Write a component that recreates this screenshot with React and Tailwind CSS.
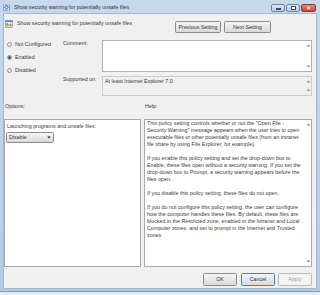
function UpArrow() {
  return (
    <svg width="5" height="3" viewBox="0 0 5 3"><path d="M0.5 2.5 L2.5 0.5 L4.5 2.5 Z" fill="#8a8a8a" /></svg>
  );
}
function DownArrow() {
  return (
    <svg width="5" height="3" viewBox="0 0 5 3"><path d="M0.5 0.5 L2.5 2.5 L4.5 0.5 Z" fill="#8a8a8a" /></svg>
  );
}

function Radio({ checked, label }) {
  return (
    <div className="h-[13px] flex items-start">
      <div className="mt-[1px] ml-[3px] w-[5px] h-[5px] rounded-full border-[0.7px] border-[#8a8f96] bg-[#f4f4f4] flex items-center justify-center">
        {checked && <div className="w-[2.4px] h-[2.4px] rounded-full bg-[#2b5d95]" />}
      </div>
      <span className="ml-[3px] mt-[-0.5px]">{label}</span>
    </div>
  );
}

function Btn({ children, w, variant }) {
  const base =
    variant === "focus"
      ? "border-[#3c85c2] text-[#333333]"
      : variant === "disabled"
      ? "border-[#b6babd] text-[#9a9a9a] bg-none bg-[#f4f4f4]"
      : "border-[#8c8c8c] text-[#333333]";
  return (
    <div
      className={`${w} h-full rounded-[1.5px] border bg-gradient-to-b from-[#f5f5f5] to-[#dadada] flex items-center justify-center ${base}`}
    >
      {children}
    </div>
  );
}

export default function App() {
  return (
    <div className="w-[320px] h-[295px] overflow-hidden bg-[#e4ebf3] font-['Liberation_Sans',Arial,sans-serif] text-[5.35px] leading-[7px] text-[#3a3a3a]">
      <div className="h-[292px] flex flex-col bg-gradient-to-b from-[#c9d9ec] to-[#b3cae6] border-b border-[#7f9bbd]">
        {/* title bar */}
        <div className="h-[14px] flex items-start pl-[3px] pr-[4px] pt-[4px]">
          <svg width="7" height="7" viewBox="0 0 7 7">
            <rect x="0.5" y="1" width="6" height="5.5" fill="#e8eef6" stroke="#5a7fae" strokeWidth="0.6" />
            <path d="M1 3.5 L3.5 1 L6 3.5 L3.5 6 Z" fill="#3f74b8" />
            <circle cx="3.5" cy="3.5" r="1" fill="#ffffff" />
          </svg>
          <span className="ml-[4px] mt-[-0.5px] text-[#22303f]">Show security warning for potentially unsafe files</span>
          <div className="ml-auto flex h-[8px]">
            <div className="w-[14px] h-full rounded-[2px] border-[0.7px] border-[#6a84a8] bg-gradient-to-b from-[#dce7f4] to-[#b7cbe3] flex items-end justify-center pb-[1.5px]">
              <div className="w-[5px] h-[1.5px] bg-white border-[0.5px] border-[#3b4c63]" />
            </div>
            <div className="ml-[1px] w-[14px] h-full rounded-[2px] border-[0.7px] border-[#6a84a8] bg-gradient-to-b from-[#dce7f4] to-[#b7cbe3] flex items-center justify-center">
              <div className="w-[5px] h-[3.5px] border-[0.8px] border-t-[1.3px] border-[#3b4c63] bg-white" />
            </div>
            <div className="ml-[1px] w-[15px] h-full rounded-[2px] border-[0.7px] border-[#8a3a30] bg-gradient-to-b from-[#e48b7b] to-[#c4402e] flex items-center justify-center">
              <svg width="5" height="4" viewBox="0 0 5 4"><path d="M0.8 0.5 L4.2 3.5 M4.2 0.5 L0.8 3.5" stroke="#ffffff" strokeWidth="1" /></svg>
            </div>
          </div>
        </div>

        {/* client */}
        <div className="flex-1 mx-[4px] mb-[3px] bg-[#f0f0f0] flex flex-col shadow-[0_0_0_1px_#a4b8d2]">
          {/* row1 */}
          <div className="h-[19px] flex items-start">
            <svg width="8" height="8" viewBox="0 0 8 8" className="mt-[6px] ml-[1px]">
              <rect x="0.5" y="0.5" width="7" height="7" fill="#f4f6f8" stroke="#6e7f95" strokeWidth="0.6" />
              <rect x="0.5" y="0.5" width="7" height="1.6" fill="#5b86c0" />
              <rect x="1.5" y="3" width="1.3" height="3.5" fill="#5aa04a" />
              <rect x="3.3" y="4" width="1.3" height="2.5" fill="#d9a23a" />
              <rect x="5.1" y="3.5" width="1.3" height="3" fill="#c85a4a" />
            </svg>
            <span className="ml-[4px] mt-[5.5px]">Show security warning for potentially unsafe files</span>
            <div className="ml-auto mr-[45px] mt-[7px] h-[12px] flex gap-[3px]">
              <Btn w="w-[46px]">Previous Setting</Btn>
              <Btn w="w-[47px]">Next Setting</Btn>
            </div>
          </div>

          {/* section 2 */}
          <div className="mt-[7px] grid grid-cols-[59px_39px_210px]">
            <div className="pt-[1px] flex flex-col">
              <Radio label="Not Configured" />
              <Radio label="Enabled" checked />
              <Radio label="Disabled" />
            </div>
            <div className="flex flex-col">
              <div className="h-[36px] mt-[-0.5px]">Comment:</div>
              <div className="mt-[0.5px]">Supported on:</div>
            </div>
            <div className="flex flex-col">
              <div className="h-[32px] bg-white border border-[#adb2b8] flex justify-end">
                <div className="w-[6px] flex flex-col justify-between items-center py-[3px]">
                  <UpArrow />
                  <DownArrow />
                </div>
              </div>
              <div className="mt-[4px] h-[20px] bg-[#f0f0f0] border border-[#c9ccd0] flex">
                <div className="flex-1 pl-[2px] pt-[0.5px]">At least Internet Explorer 7.0</div>
                <div className="w-[6px] flex flex-col justify-between items-center py-[3px]">
                  <UpArrow />
                  <DownArrow />
                </div>
              </div>
            </div>
          </div>

          {/* labels */}
          <div className="mt-[6.5px] h-[7px] flex">
            <div className="w-[141px] pl-[1px]">Options:</div>
            <div>Help:</div>
          </div>

          {/* panels */}
          <div className="mt-[9.5px] h-[148px] flex gap-[3px]">
            <div className="w-[137px] h-full bg-white border border-[#a9a9a9] pl-[2px] pt-[2.5px]">
              <div>Launching programs and unsafe files:</div>
              <div className="mt-[2.5px] ml-[-1px] w-[48px] h-[11px] rounded-[1.5px] border border-[#8c8c8c] bg-gradient-to-b from-[#f5f5f5] to-[#d9d9d9] flex items-center pl-[2px] pr-[2px]">
                <span className="flex-1">Disable</span>
                <svg width="4" height="3" viewBox="0 0 4 3"><path d="M0.3 0.5 L2 2.5 L3.7 0.5 Z" fill="#222" /></svg>
              </div>
            </div>
            <div className="w-[168px] h-full bg-white border border-[#a9a9a9] flex">
              <div className="flex-1 pl-[2px] whitespace-nowrap">
                This policy setting controls whether or not the "Open File -<br />
                Security Warning" message appears when the user tries to open<br />
                executable files or other potentially unsafe files (from an intranet<br />
                file share by using File Explorer, for example).<br />
                <br />
                If you enable this policy setting and set the drop-down box to<br />
                Enable, these files open without a security warning. If you set the<br />
                drop-down box to Prompt, a security warning appears before the<br />
                files open.<br />
                <br />
                If you disable this policy setting, these files do not open.<br />
                <br />
                If you do not configure this policy setting, the user can configure<br />
                how the computer handles these files. By default, these files are<br />
                blocked in the Restricted zone, enabled in the Intranet and Local<br />
                Computer zones, and set to prompt in the Internet and Trusted<br />
                zones.
              </div>
              <div className="w-[6px] flex flex-col justify-between items-center py-[3px]">
                <UpArrow />
                <DownArrow />
              </div>
            </div>
          </div>

          {/* buttons */}
          <div className="mt-[6px] h-[13px] flex justify-end pr-[4px]">
            <Btn w="w-[34px]">OK</Btn>
            <div className="w-[4px]" />
            <Btn w="w-[34px]" variant="focus">Cancel</Btn>
            <div className="w-[3px]" />
            <Btn w="w-[34px]" variant="disabled">Apply</Btn>
          </div>
        </div>
      </div>
    </div>
  );
}
